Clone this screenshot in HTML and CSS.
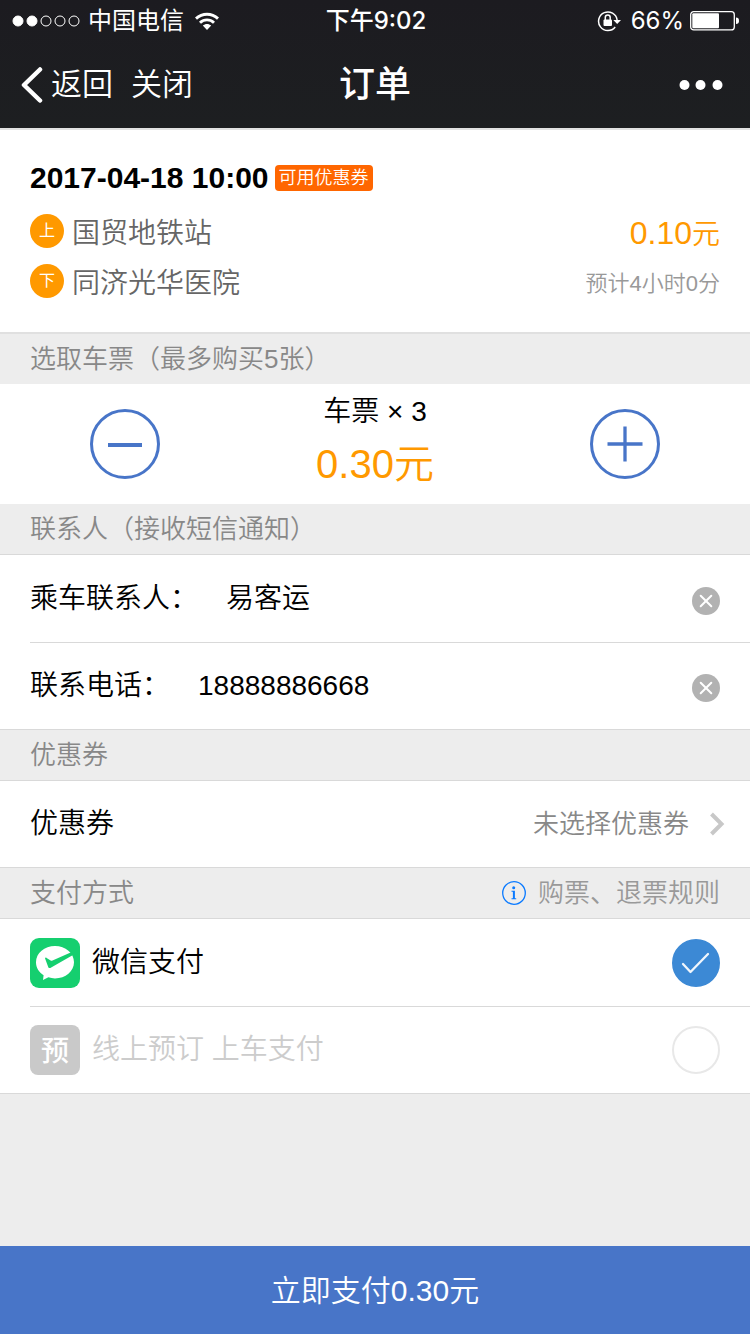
FILE: index.html
```html
<!DOCTYPE html>
<html lang="zh-CN">
<head>
<meta charset="utf-8">
<meta name="viewport" content="width=device-width">
<title>订单</title>
<link rel="stylesheet" href="styles.css">
</head>
<body>
<div class="page">
  <header class="top">
    <div class="status">
      <div class="status-left">
        <svg width="70" height="12" viewBox="0 0 70 12" aria-hidden="true">
          <g fill="#fff" stroke="#fff"><circle cx="6" cy="6" r="5"/><circle cx="20" cy="6" r="5"/></g>
          <g fill="none" stroke="#fff"><circle cx="34" cy="6" r="5"/><circle cx="48" cy="6" r="5"/><circle cx="62" cy="6" r="5"/></g>
        </svg>
        <span>中国电信</span>
        <svg class="wifi" width="26" height="20" viewBox="0 0 26 20" aria-hidden="true">
          <path d="M1 6.500C7.500.100 18.500.100 25 6.500L23 8.700C17.500 3.500 8.500 3.500 3 8.700Z" fill="#fff"/>
          <path d="M5 10.700C9.500 6.300 16.500 6.300 21 10.700L19 12.800C15.500 9.500 10.500 9.500 7 12.800Z" fill="#fff"/>
          <path d="M8.800 14.600C11.300 12.300 14.700 12.300 17.200 14.600L13 19Z" fill="#fff"/>
        </svg>
      </div>
      <span class="clock">下午9:02</span>
      <div class="status-right">
        <svg width="24" height="22" viewBox="0 0 24 22" aria-hidden="true">
          <path d="M18.200 17A9.300 9.300 0 1 1 20.100 10" fill="none" stroke="#fff" stroke-width="1.500"/>
          <path d="M16.300 10H24L20.200 14Z" fill="#fff"/>
          <rect x="6.500" y="9.500" width="8.500" height="6.500" rx="1" fill="#fff"/>
          <path d="M8.300 10V7.500a2.450 2.450 0 0 1 4.900 0V10" fill="none" stroke="#fff" stroke-width="1.500"/>
        </svg>
        <span class="percent">66%</span>
        <svg width="50" height="20" viewBox="0 0 50 20" aria-hidden="true">
          <rect x=".7" y=".7" width="43.600" height="18.200" rx="3" fill="none" stroke="#fff" stroke-width="1.300"/>
          <rect x="2.300" y="2.300" width="26.700" height="15" rx="1" fill="#fff"/>
          <path d="M46 6.500q3 0 3 3.300t-3 3.300Z" fill="#fff"/>
        </svg>
      </div>
    </div>
    <nav class="nav">
      <div class="nav-left">
        <button class="nav-btn" type="button">
          <svg width="22" height="36" viewBox="0 0 22 36" aria-hidden="true"><path d="M19 2.500 3 18 19 33.500" fill="none" stroke="#fff" stroke-width="4.500" stroke-linecap="round" stroke-linejoin="round"/></svg>
          <span>返回</span>
        </button>
        <button class="nav-btn" type="button">关闭</button>
      </div>
      <h1 class="title">订单</h1>
      <button class="nav-btn more" type="button" aria-label="更多">
        <svg width="44" height="10" viewBox="0 0 44 10" aria-hidden="true"><g fill="#fff"><circle cx="5.500" cy="5" r="5"/><circle cx="21.500" cy="5" r="5"/><circle cx="38.500" cy="5" r="5"/></g></svg>
      </button>
    </nav>
  </header>

  <main class="main">
    <section class="trip">
      <div class="trip-head">
        <time class="trip-time">2017-04-18 10:00</time>
        <span class="coupon-tag">可用优惠券</span>
      </div>
      <div class="stop">
        <span class="stop-mark">上</span>
        <span class="stop-name">国贸地铁站</span>
        <span class="fare">0.10<span class="fare-unit">元</span></span>
      </div>
      <div class="stop">
        <span class="stop-mark">下</span>
        <span class="stop-name">同济光华医院</span>
        <span class="duration">预计4小时0分</span>
      </div>
    </section>

    <h2 class="section-title">选取车票（最多购买5张）</h2>
    <section class="tickets">
      <button class="step" type="button" aria-label="减少">
        <svg width="70" height="70" viewBox="0 0 70 70" aria-hidden="true"><circle cx="35" cy="35" r="33.500" fill="none" stroke="#4875c8" stroke-width="3"/><path d="M18 36H52" stroke="#4875c8" stroke-width="4"/></svg>
      </button>
      <div class="ticket-sum">
        <span class="ticket-count">车票 × 3</span>
        <span class="ticket-total">0.30元</span>
      </div>
      <button class="step" type="button" aria-label="增加">
        <svg width="70" height="70" viewBox="0 0 70 70" aria-hidden="true"><circle cx="35" cy="35" r="33.500" fill="none" stroke="#4875c8" stroke-width="3"/><path d="M17.500 35H52.500M35 17.500V52.500" stroke="#4875c8" stroke-width="3.300"/></svg>
      </button>
    </section>

    <h2 class="section-title">联系人（接收短信通知）</h2>
    <section class="list">
      <div class="row">
        <label for="name">乘车联系人：</label>
        <input class="field" id="name" type="text" value="易客运">
        <button class="clear" type="button" aria-label="清除联系人">
          <svg width="28" height="28" viewBox="0 0 28 28" aria-hidden="true"><circle cx="14" cy="14" r="14" fill="#b2b2b2"/><path d="M8.700 8.700 19.300 19.300M19.300 8.700 8.700 19.300" stroke="#fff" stroke-width="2" stroke-linecap="round"/></svg>
        </button>
      </div>
      <div class="row">
        <label for="phone">联系电话：</label>
        <input class="field" id="phone" type="tel" value="18888886668">
        <button class="clear" type="button" aria-label="清除电话">
          <svg width="28" height="28" viewBox="0 0 28 28" aria-hidden="true"><circle cx="14" cy="14" r="14" fill="#b2b2b2"/><path d="M8.700 8.700 19.300 19.300M19.300 8.700 8.700 19.300" stroke="#fff" stroke-width="2" stroke-linecap="round"/></svg>
        </button>
      </div>
    </section>

    <h2 class="section-title">优惠券</h2>
    <section class="list">
      <button class="row coupon" type="button">
        <span>优惠券</span>
        <span class="coupon-value">未选择优惠券</span>
        <svg width="16" height="24" viewBox="0 0 16 24" aria-hidden="true"><path d="M2.500 2 12.500 12 2.500 22" fill="none" stroke="#c8c8c8" stroke-width="4"/></svg>
      </button>
    </section>

    <div class="section-title">
      <h2 class="section-text">支付方式</h2>
      <a class="rules" href="#rules">
        <svg width="24" height="24" viewBox="0 0 24 24" aria-hidden="true"><circle cx="12" cy="12" r="11.300" fill="none" stroke="#0a7aff" stroke-width="1.300"/><circle cx="11.700" cy="6.700" r="1.500" fill="#0a7aff"/><path d="M9.500 9.800H12.900V17.300H14.200V18.200H9.500V17.300H10.900V10.700H9.500Z" fill="#0a7aff"/></svg>
        <span>购票、退票规则</span>
      </a>
    </div>
    <section class="list">
      <label class="row pay">
        <svg width="50" height="50" viewBox="0 0 50 50" aria-hidden="true">
          <rect width="50" height="50" rx="9" fill="#15cf6f"/>
          <path d="M25 8C14.500 8 6 15.200 6 24.200C6 29.600 9 34.200 13.600 37.200L13 41.900L18.400 39.300C20.500 40 22.700 40.400 25 40.400C35.500 40.400 44 33.200 44 24.200C44 15.200 35.500 8 25 8Z" fill="#fff"/>
          <path d="M15 20.200C15.300 19.400 16 19.500 16.600 19.900L20.600 22.600Q21.500 23 22.500 22.600L41.200 14.300L43 17L20.300 29.900Q19 30.500 18.300 29.200Z" fill="#15cf6f"/>
        </svg>
        <span class="pay-name">微信支付</span>
        <span class="choice">
          <input class="radio" type="radio" name="pay" checked>
          <svg class="tick" width="48" height="48" viewBox="0 0 48 48" aria-hidden="true"><path d="M11 25 18.500 33 36 15" fill="none" stroke="#f1f6fc" stroke-width="2.300" stroke-linecap="round" stroke-linejoin="round"/></svg>
        </span>
      </label>
      <label class="row pay off">
        <span class="pay-mark">预</span>
        <span class="pay-name">线上预订 上车支付</span>
        <span class="choice"><input class="radio" type="radio" name="pay" disabled></span>
      </label>
    </section>
  </main>

  <button class="submit" type="button">立即支付0.30元</button>
</div>
</body>
</html>
```
FILE: styles.css
```css
* {
  box-sizing: border-box;
}

body {
  margin: 0;
  background: #ededed;
  color: #000;
  font-family: "Liberation Sans", "Noto Sans CJK SC", sans-serif;
  font-size: 28px;
  font-weight: 350;
  line-height: 40px;
}

button,
input {
  margin: 0;
  padding: 0;
  border: 0;
  background: none;
  color: inherit;
  font: inherit;
}

svg {
  display: block;
  flex: none;
}

.page {
  display: flex;
  flex-direction: column;
  min-height: 100vh;
}

/* Header */
.top {
  background: linear-gradient(#1c1b20, #1d1f21);
  color: #fff;
}

.status,
.nav {
  display: grid;
  grid-template-columns: 1fr auto 1fr;
  align-items: center;
}

.status {
  height: 40px;
  padding: 1px 10px 0 12px;
  font-family: Inter, "Noto Sans CJK SC", sans-serif;
  font-size: 24px;
  font-weight: 400;
}

.status-left,
.status-right {
  display: flex;
  align-items: center;
  gap: 6px;
}

.status-right {
  justify-content: flex-end;
}

.wifi {
  margin-left: 4px;
}

.clock {
  font-weight: 500;
}

.percent {
  padding-left: 4px;
}

.nav {
  height: 88px;
  padding: 2px 21px 0;
}

.nav-left {
  display: flex;
  gap: 18px;
}

.nav-btn {
  display: flex;
  align-items: center;
  gap: 8px;
  font-size: 31px;
}

.more {
  justify-self: end;
  margin-right: 6px;
}

.title {
  margin: 0;
  font-size: 36px;
  font-weight: 500;
}

/* Trip summary */
.trip {
  display: flex;
  flex-direction: column;
  padding: 28px 30px 23px;
  border-top: 2px solid #e2e2e2;
  border-bottom: 2px solid #e0e0e0;
  background: #fff;
}

.trip-head {
  display: flex;
  align-items: center;
  gap: 6px;
  margin-bottom: 11px;
}

.trip-time {
  font-size: 30px;
  font-weight: 700;
}

.coupon-tag {
  padding: 0 4px;
  border-radius: 4px;
  background: #ff6600;
  color: #fff;
  font-size: 18px;
  line-height: 26px;
}

.stop {
  display: flex;
  align-items: center;
  gap: 8px;
  height: 50px;
  color: #666;
}

.stop-mark {
  width: 34px;
  margin-bottom: 6px;
  border-radius: 50%;
  background: #ff9900;
  color: #fff;
  font-size: 16px;
  font-weight: 400;
  line-height: 34px;
  text-align: center;
}

.stop-name {
  flex: 1;
}

.fare {
  color: #ff9900;
  font-size: 32px;
}

.fare-unit {
  font-size: 28px;
}

.duration {
  color: #999;
  font-size: 22px;
}

/* Section headings */
.section-title {
  display: flex;
  align-items: center;
  justify-content: space-between;
  height: 50px;
  margin: 0;
  padding: 0 30px;
  color: #888;
  font-size: 26px;
  font-weight: 350;
}

.section-text {
  margin: 0;
  font: inherit;
}

.rules {
  display: flex;
  align-items: center;
  gap: 12px;
  color: #999;
  text-decoration: none;
}

/* Ticket counter */
.tickets {
  display: flex;
  align-items: center;
  justify-content: space-between;
  height: 120px;
  padding: 0 90px;
  background: #fff;
}

.ticket-sum {
  display: flex;
  flex-direction: column;
  align-items: center;
}

.ticket-total {
  color: #ff9900;
  font-size: 40px;
  line-height: 64px;
}

/* Lists */
.list {
  padding-left: 30px;
  border-top: 1px solid #d9d9d9;
  border-bottom: 1px solid #d9d9d9;
  background: #fff;
}

.row {
  display: flex;
  align-items: center;
  width: 100%;
  height: 87px;
  padding-right: 30px;
}

.row + .row {
  border-top: 1px solid #d9d9d9;
}

.field {
  flex: 1;
  min-width: 0;
  margin: 0 28px;
  outline: none;
}

.clear {
  padding-top: 4px;
}

.coupon {
  justify-content: space-between;
  height: 86px;
  padding-right: 25px;
}

.coupon-value {
  flex: 1;
  padding-right: 20px;
  color: #888;
  font-size: 26px;
  text-align: right;
}

.pay {
  gap: 12px;
}

.pay-name {
  flex: 1;
}

.off {
  color: #ccc;
}

.pay-mark {
  width: 50px;
  height: 50px;
  padding-top: 3px;
  border-radius: 8px;
  background: #c9c9c9;
  color: #fff;
  font-weight: 500;
  line-height: 48px;
  text-align: center;
}

.choice {
  display: grid;
}

.choice > * {
  grid-area: 1 / 1;
}

.radio {
  width: 48px;
  height: 48px;
  border: 2px solid #e8e8e8;
  border-radius: 50%;
  appearance: none;
}

.radio:checked {
  border-color: #3c89d5;
  background: #3c89d5;
}

.tick {
  z-index: 1;
}

/* Pay button */
.submit {
  height: 88px;
  margin-top: auto;
  padding-top: 2px;
  background: #4875c8;
  color: #fff;
  font-size: 30px;
}
```
